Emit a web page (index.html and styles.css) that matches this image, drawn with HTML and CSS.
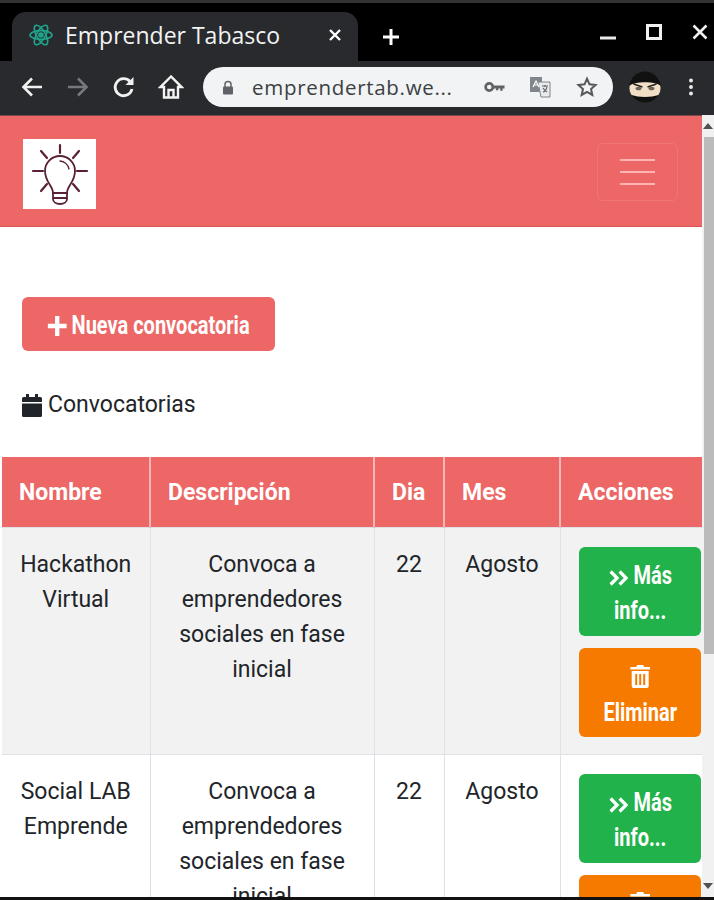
FILE: index.html
```html
<!DOCTYPE html>
<html lang="es">
<head>
    <meta charset="UTF-8">
    <meta name="viewport" content="width=device-width, initial-scale=1.0">
    <title>Emprender Tabasco</title>
    <link rel="stylesheet" href="styles.css">
</head>
<body>
<div class="browser">

    <!-- Browser tabs -->
    <div class="tabstrip">
        <div class="tab">
            <svg class="favicon" viewBox="0 0 24 24" width="24" height="24" fill="none" stroke="#1fa58c" stroke-width="1.6">
                <ellipse cx="12" cy="12" rx="11" ry="4.4"/>
                <ellipse cx="12" cy="12" rx="11" ry="4.4" transform="rotate(60 12 12)"/>
                <ellipse cx="12" cy="12" rx="11" ry="4.4" transform="rotate(120 12 12)"/>
                <circle cx="12" cy="12" r="2" fill="#1fa58c"/>
            </svg>
            <span class="tab-title">Emprender Tabasco</span>
            <svg class="tab-close" viewBox="0 0 14 14" width="14" height="14" stroke="#fff" stroke-width="2.4">
                <path d="M2 2l10 10M12 2L2 12"/>
            </svg>
        </div>
        <svg class="new-tab" viewBox="0 0 18 18" width="18" height="18" stroke="#fff" stroke-width="3">
            <path d="M9 1v16M1 9h16"/>
        </svg>
        <div class="window-btns">
            <svg class="win-min" viewBox="0 0 16 4" width="16" height="4"><path d="M0 2h16" stroke="#e8e8e8" stroke-width="3"/></svg>
            <svg viewBox="0 0 16 16" width="16" height="16" fill="none"><rect x="1.5" y="1.5" width="13" height="13" stroke="#f0f0f0" stroke-width="3"/></svg>
            <svg viewBox="0 0 16 16" width="16" height="16"><path d="M1.5 1.5l13 13M14.5 1.5l-13 13" stroke="#f0f0f0" stroke-width="2.6"/></svg>
        </div>
    </div>

    <!-- Browser toolbar -->
    <div class="toolbar">
        <div class="nav-btns">
            <svg viewBox="0 0 24 24" width="24" height="24" fill="none" stroke="#f1f1f1" stroke-width="2.6"><path d="M22 12H4M12 3.5L3.5 12l8.5 8.5"/></svg>
            <svg viewBox="0 0 24 24" width="24" height="24" fill="none" stroke="#77787a" stroke-width="2.6"><path d="M2 12h18M12 3.5l8.5 8.5-8.5 8.5"/></svg>
            <svg viewBox="0 0 24 24" width="24" height="24" fill="none" stroke="#f1f1f1" stroke-width="2.8"><path d="M20 14a8.5 8.5 0 1 1-2-7.5"/><path d="M21.500 2v8h-8z" fill="#f1f1f1" stroke="none"/></svg>
            <svg viewBox="0 0 26 26" width="26" height="26" fill="none" stroke="#f4f4f4" stroke-width="2.4"><path d="M13 2.500L2.500 13H6v10.500h14V13h3.500zM10.500 23.500V16h5v7.500"/></svg>
        </div>
        <div class="address">
            <svg class="lock" viewBox="0 0 12 15" width="12" height="15"><path d="M3 7V4.500a3 3 0 0 1 6 0V7" fill="none" stroke="#5f6368" stroke-width="1.500"/><rect x="1" y="6.500" width="10" height="8" rx="1" fill="#5f6368"/></svg>
            <span class="url">emprendertab.we...</span>
            <svg class="addr-key" viewBox="0 0 22 12" width="21" height="12"><circle cx="5.500" cy="6" r="3.800" fill="none" stroke="#5f6368" stroke-width="2.800"/><path d="M9 4.500h12.500v3h-2v2.400h-2.500V7.500h-2v2H12.500v-2H9z" fill="#5f6368"/></svg>
            <svg class="addr-translate" viewBox="0 0 22 22" width="22" height="22"><rect x="1" y="1" width="12" height="15" fill="#80868b"/><path d="M9 6h12v15H12z" fill="#e8eaed" stroke="#80868b"/><path d="M4 11l3-6 3 6M5 9h4" fill="none" stroke="#fff" stroke-width="1.200"/><path d="M13 10h6M16 9v2M18 11c-1 3-3 5-4 5M14 12c1 2 3 3 4 4" fill="none" stroke="#5f6368" stroke-width="1.100"/></svg>
            <svg class="addr-star" viewBox="0 0 24 24" width="22" height="22" fill="none" stroke="#55585c" stroke-width="2.200"><path d="M12 3l2.700 6.100 6.600.7-4.900 4.400 1.400 6.500-5.800-3.300-5.800 3.300 1.400-6.500-4.900-4.400 6.600-.7z"/></svg>
        </div>
        <svg class="ninja" viewBox="0 0 32 32" width="32" height="32">
            <circle cx="16" cy="16" r="15.500" fill="#111"/>
            <path d="M.6 15c4-5 27-5 30.800 0 .6 4-.6 7-2 9-7 2.500-20 2.500-26.800 0-1.400-2-2.600-5-2-9z" fill="#f1dfc6"/>
            <path d="M4.500 13l9 3M27.500 13l-9 3" stroke="#222" stroke-width="1.500"/>
            <ellipse cx="9.500" cy="17.500" rx="3" ry="1.800" fill="#6b655c"/>
            <ellipse cx="22.500" cy="17.500" rx="3" ry="1.800" fill="#6b655c"/>
        </svg>
        <svg class="menu-dots" viewBox="0 0 4 18" width="4" height="18" fill="#e8e8e8">
            <circle cx="2" cy="2.500" r="2"/><circle cx="2" cy="9" r="2"/><circle cx="2" cy="15.500" r="2"/>
        </svg>
    </div>

    <div class="viewport">
        <div class="page">
            <nav class="navbar">
                <div class="logo">
                    <svg viewBox="0 0 73 70" width="73" height="70" fill="none" stroke="#5a2038" stroke-width="1.800" stroke-linecap="round">
                        <path d="M37 6v8M10 32h10M54 32h10M18 12l6 7M56 12l-6 7M18 52l6-7M56 52l-6-7" stroke-width="2.200"/>
                        <path d="M30 54c0-7-8-11-8-22a15 15 0 0 1 30 0c0 11-8 15-8 22z"/>
                        <path d="M37 22a10 10 0 0 1 9 8" stroke-width="1.300"/>
                        <path d="M30 54v6c0 3 3 5 7 5s7-2 7-5v-6M30 59h14"/>
                    </svg>
                </div>
                <button class="toggler" type="button">
                    <span></span><span></span><span></span>
                </button>
            </nav>

            <div class="content">
                <a class="btn btn-new" href="#">
                    <span class="btn-label">
                        <svg viewBox="0 0 20 20" width="24" height="20" preserveAspectRatio="none" stroke="#fff" stroke-width="4.500"><path d="M10 0v20M0 10h20"/></svg>
                        Nueva convocatoria
                    </span>
                </a>
                <p class="section-title">
                    <svg viewBox="0 0 20 23" width="20" height="23" fill="#212529">
                        <path d="M4 0h3v3h6V0h3v3h2.500A1.500 1.500 0 0 1 20 4.500V8H0V4.500A1.500 1.500 0 0 1 1.500 3H4zM0 9.500h20v12a1.500 1.500 0 0 1-1.500 1.500h-17A1.500 1.500 0 0 1 0 21.500z"/>
                    </svg>
                    Convocatorias
                </p>
            </div>

            <table class="table">
                <thead>
                    <tr>
                        <th class="col-name">Nombre</th>
                        <th class="col-desc">Descripción</th>
                        <th class="col-day">Dia</th>
                        <th class="col-month">Mes</th>
                        <th class="col-actions">Acciones</th>
                    </tr>
                </thead>
                <tbody>
                    <tr class="row-odd">
                        <td>Hackathon Virtual</td>
                        <td>Convoca a emprendedores sociales en fase inicial</td>
                        <td>22</td>
                        <td>Agosto</td>
                        <td class="actions">
                            <a class="btn btn-info" href="#">
                                <span class="btn-label">
                                    <svg viewBox="0 0 20 16" width="25" height="16" preserveAspectRatio="none" fill="none" stroke="#fff" stroke-width="3.200"><path d="M2 1.500L8.500 8 2 14.500M11 1.500L17.500 8 11 14.500"/></svg>
                                    Más<br>info...
                                </span>
                            </a>
                            <a class="btn btn-delete" href="#">
                                <span class="btn-label">
                                    <svg viewBox="0 0 20 23" width="25" height="23" preserveAspectRatio="none" fill="#fff"><path d="M7 0h6l1 2h6v2.500H0V2h6zM1.500 6h17v15a2 2 0 0 1-2 2h-13a2 2 0 0 1-2-2zM5 9v11h2V9zm4 0v11h2V9zm4 0v11h2V9z" fill-rule="evenodd"/></svg>
                                    <br>Eliminar
                                </span>
                            </a>
                        </td>
                    </tr>
                    <tr>
                        <td>Social LAB Emprende</td>
                        <td>Convoca a emprendedores sociales en fase inicial</td>
                        <td>22</td>
                        <td>Agosto</td>
                        <td class="actions">
                            <a class="btn btn-info" href="#">
                                <span class="btn-label">
                                    <svg viewBox="0 0 20 16" width="25" height="16" preserveAspectRatio="none" fill="none" stroke="#fff" stroke-width="3.200"><path d="M2 1.500L8.500 8 2 14.500M11 1.500L17.500 8 11 14.500"/></svg>
                                    Más<br>info...
                                </span>
                            </a>
                            <a class="btn btn-delete" href="#">
                                <span class="btn-label">
                                    <svg viewBox="0 0 20 23" width="25" height="23" preserveAspectRatio="none" fill="#fff"><path d="M7 0h6l1 2h6v2.500H0V2h6zM1.500 6h17v15a2 2 0 0 1-2 2h-13a2 2 0 0 1-2-2zM5 9v11h2V9zm4 0v11h2V9zm4 0v11h2V9z" fill-rule="evenodd"/></svg>
                                    <br>Eliminar
                                </span>
                            </a>
                        </td>
                    </tr>
                </tbody>
            </table>
        </div>

        <div class="scrollbar">
            <div class="arrow-up"></div>
            <div class="thumb"></div>
            <div class="arrow-down"></div>
        </div>
    </div>
    <div class="screen-edge"></div>
</div>
</body>
</html>
```

FILE: styles.css
```css
* {
    box-sizing: border-box;
}

body {
    margin: 0;
    font-family: Roboto, "Liberation Sans", sans-serif;
    color: #212529;
}

svg {
    display: block;
    flex-shrink: 0;
}

.browser {
    height: 900px;
    display: flex;
    flex-direction: column;
    overflow: hidden;
}

/* tabs */
.tabstrip {
    height: 61px;
    background: #000;
    border-top: 3px solid #333;
    display: flex;
    align-items: flex-end;
    padding-left: 12px;
}

.tab {
    width: 346px;
    height: 49px;
    background: #292a2d;
    border-radius: 14px 14px 0 0;
    display: flex;
    align-items: center;
    padding: 0 16px 4px 17px;
    color: #f1f3f4;
}

.tab-title {
    margin-left: 12px;
    font-family: "Open Sans", sans-serif;
    font-size: 23px;
    flex: 1;
    white-space: nowrap;
}

.new-tab {
    margin: 0 0 15px 24px;
}

.window-btns {
    margin-left: auto;
    align-self: flex-start;
    display: flex;
    align-items: flex-start;
    gap: 30px;
    padding: 21px 6px 0 0;
}

.win-min {
    margin-top: 12px;
}

/* toolbar */
.toolbar {
    height: 54px;
    background: #292a2d;
    display: flex;
    align-items: center;
    padding: 0 0 2px 20px;
}

.nav-btns {
    display: flex;
    align-items: center;
    gap: 22px;
    width: 183px;
}

.address {
    width: 410px;
    height: 40px;
    background: #f1f3f4;
    border-radius: 20px;
    display: flex;
    align-items: center;
    padding-left: 19px;
}

.url {
    margin-left: 18px;
    width: 232px;
    font-family: "Open Sans", sans-serif;
    font-size: 20.500px;
    letter-spacing: .7px;
    color: #3c4043;
    white-space: nowrap;
}

.addr-translate {
    margin-left: 24px;
}

.addr-star {
    margin-left: 25px;
}

.ninja {
    margin-left: 16px;
}

.menu-dots {
    margin-left: 28px;
}

/* page */
.viewport {
    flex: 1;
    display: flex;
    min-height: 0;
}

.page {
    width: 702px;
    overflow: hidden;
    background: #fff;
}

.navbar {
    height: 112px;
    background: #ec6765;
    border-top: 1px solid #7a4a50;
    border-bottom: 1px solid #d95654;
    display: flex;
    align-items: center;
    justify-content: space-between;
    padding: 2px 24px 0 23px;
}

.logo {
    width: 73px;
    height: 70px;
    background: #fff;
    margin-top: 4px;
}

.toggler {
    width: 81px;
    height: 58px;
    background: transparent;
    border: 1px solid rgba(255, 255, 255, .1);
    border-radius: 6px;
    display: flex;
    flex-direction: column;
    align-items: center;
    justify-content: center;
    gap: 9.500px;
    padding: 0;
}

.toggler span {
    width: 35px;
    height: 2.500px;
    background: #fdb4b2;
}

.content {
    padding: 70px 22px 0;
}

.btn {
    display: block;
    color: #fff;
    text-decoration: none;
    text-align: center;
    border-radius: 6px;
    font-weight: 700;
    font-size: 25px;
    line-height: 35px;
    overflow: hidden;
}

/* no condensed font on this machine, so the label is squeezed */
.btn-label {
    display: block;
    width: 125%;
    transform: scaleX(.8);
    transform-origin: 0 0;
}

.btn svg {
    display: inline-block;
    vertical-align: -2px;
}

.btn-new {
    width: 253px;
    height: 54px;
    background: #ec6765;
    line-height: 58px;
    white-space: nowrap;
}

.section-title {
    margin: 37px 0 0;
    display: flex;
    align-items: center;
    gap: 6px;
    font-size: 23px;
    line-height: 34px;
}

.table {
    margin: 35px 0 0 2px;
    width: 700px;
    border-collapse: collapse;
    table-layout: fixed;
    font-size: 23px;
    line-height: 35px;
}

.table th {
    height: 70px;
    background: #ec6765;
    color: #fff;
    font-weight: 700;
    text-align: left;
    padding: 2px 17px 0;
    border: 2px solid #f5b8b6;
    border-width: 0 2px;
}

.table th:first-child,
.table td:first-child {
    border-left: 0;
}

.table th:last-child,
.table td:last-child {
    border-right: 0;
}

.col-name {
    width: 148px;
}

.col-desc {
    width: 224px;
}

.col-day {
    width: 70px;
}

.col-month {
    width: 116px;
}

.table td {
    padding: 19px 17px 17px;
    text-align: center;
    vertical-align: top;
    border: 1px solid #dee2e6;
}

.row-odd td {
    background: #f2f2f2;
}

.table td.actions {
    padding: 19px 1px 17px 18px;
}

.btn-info {
    background: #22b24c;
    height: 89px;
    padding-top: 11px;
    margin-bottom: 12px;
}

.btn-delete {
    background: #f77a00;
    height: 89px;
    padding-top: 12px;
}

.scrollbar {
    width: 12px;
    background: #f1f1f1;
    display: flex;
    flex-direction: column;
}

.arrow-up {
    margin: 8px auto 0;
    border: 5px solid transparent;
    border-top: 0;
    border-bottom: 6px solid #505050;
    width: 0;
}

.thumb {
    margin: 8px 0 0 2px;
    height: 517px;
    background: #bbb;
}

.arrow-down {
    margin: auto auto 8px;
    border: 5px solid transparent;
    border-bottom: 0;
    border-top: 6px solid #505050;
    width: 0;
}

.screen-edge {
    height: 3px;
    background: #111;
}
```
